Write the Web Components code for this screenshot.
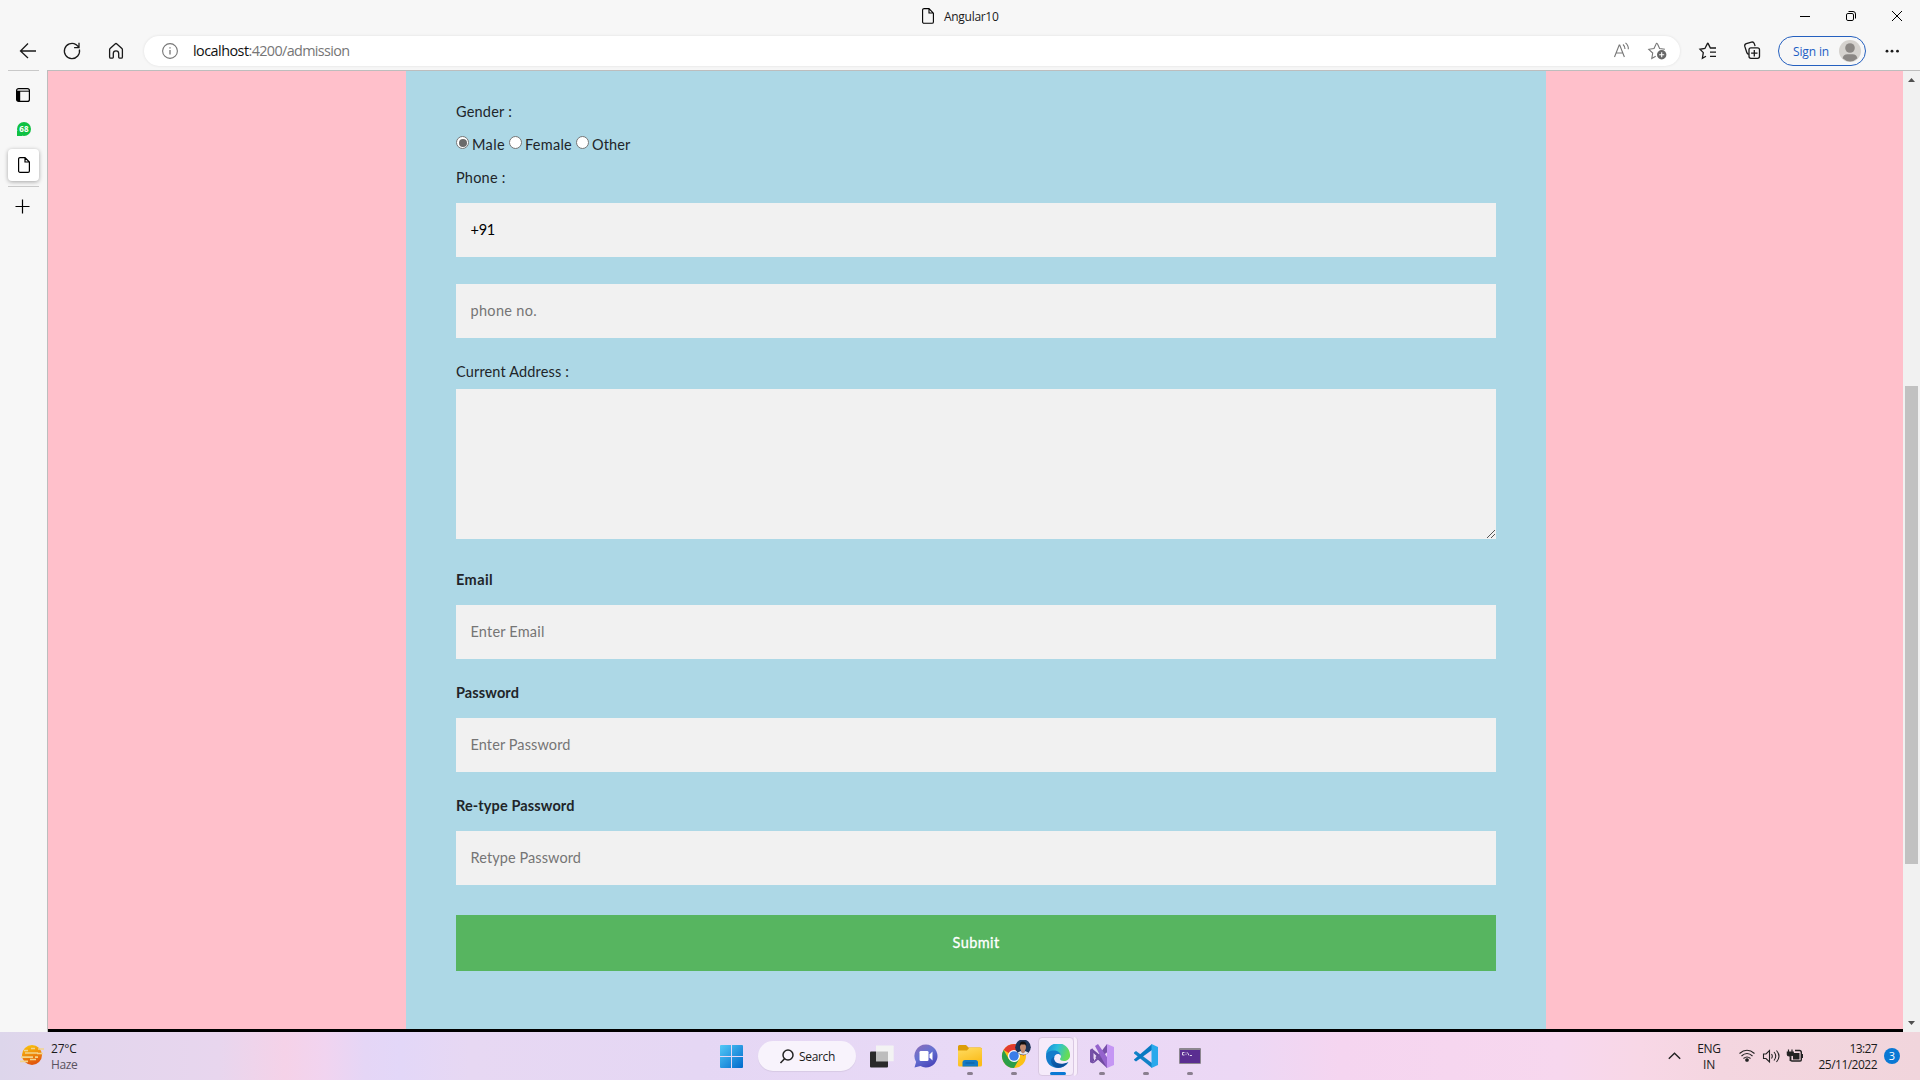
<!DOCTYPE html>
<html lang="en">
<head>
<meta charset="utf-8">
<title>Angular10</title>
<style>
html,body{margin:0;padding:0;height:100%;overflow:hidden;background:#f7f7f7}
desk-top{height:1080px}
</style>
</head>
<body>
<desk-top></desk-top>
<script>
function define(name, css, html, connected) {
  const t = document.createElement('template');
  t.innerHTML = '<style>*{box-sizing:border-box}svg{display:block}' + css + '</style>' + html;
  customElements.define(name, class extends HTMLElement {
    constructor() {
      super();
      this.attachShadow({ mode: 'open' }).appendChild(t.content.cloneNode(true));
    }
    connectedCallback() { if (connected) connected.call(this, this.shadowRoot); }
  });
}

/* A single line of text whose tracking is adjusted to a given width. */
define('fit-text', ':host{display:inline-block;white-space:pre;flex:none}span{display:inline-block}', '<span><slot></slot></span>', function (root) {
  const s = root.querySelector('span'), want = +this.getAttribute('w'), n = this.textContent.length;
  if (!want) return;
  s.style.letterSpacing = (want - s.getBoundingClientRect().width) / n + 'px';
});

define('title-bar', `
:host{display:flex;height:32px;align-items:center;font:12px "Open Sans",sans-serif;color:#1b1b1b}
.tab{flex:1;display:flex;align-items:center;padding-left:922px;gap:10px}
.win{display:flex}.win svg{width:46px;height:32px}`,
`<div class="tab"><svg width="12" height="16" viewBox="0 0 12 16" fill="none" stroke="#000" stroke-width="1.1"><path d="M1.8.6H7l4.4 4.5v8.8a1.4 1.4 0 0 1-1.4 1.4H2a1.4 1.4 0 0 1-1.4-1.4V2A1.4 1.4 0 0 1 2 .6M7 .6V5h4.4"/></svg><fit-text w="54.5">Angular10</fit-text></div>
<div class="win">
<svg viewBox="0 0 46 32" stroke="#000"><path d="M18 16.5h10"/></svg>
<svg viewBox="0 0 46 32" fill="none" stroke="#000"><rect x="18.5" y="13.5" width="7" height="7" rx="1.4"/><path d="M20.5 11.5H25a2.5 2.5 0 0 1 2.5 2.5v4.5"/></svg>
<svg viewBox="0 0 46 32" fill="none" stroke="#000"><path d="m18 11 10 10m0-10L18 21"/></svg>
</div>`);

define('tool-bar', `
:host{display:flex;height:38px;align-items:flex-start;padding-top:4px;font:14.4px "Open Sans",sans-serif}
.nav{display:flex;width:144px;flex:none}.nav svg{width:44px;height:30px;flex:none}
.addr{width:1536px;flex:none;height:30px;border-radius:15px;background:#fff;box-shadow:0 0 3px #0000001a;display:flex;align-items:center;padding-left:18px}
.url{flex:1;padding-left:15px;display:flex;line-height:30px;color:#767676}
.url fit-text:first-child{color:#111}
.addr>svg{flex:none}
.r{display:flex;flex:1}
.sign{margin-left:10px;width:88px;height:30px;border:1.4px solid #2560bf;border-radius:15px;display:flex;align-items:center;justify-content:flex-end;gap:10px;padding-right:4px;color:#1d5dc4;font-size:12px;flex:none}`,
`<div class="nav">
<svg style="margin-left:6px" viewBox="6 0 44 30" fill="none" stroke="#1a1a1a" stroke-width="1.3"><path d="M36 15H20.5M28 7.5 20.5 15l7.5 7"/></svg>
<svg viewBox="50 0 44 30" fill="none" stroke="#1a1a1a" stroke-width="1.3"><path d="M79.4 13.5A7.6 7.6 0 1 1 76 8.6l3 2.6M79 6.8v4.9h-4.9"/></svg>
<svg viewBox="94 0 44 30" fill="none" stroke="#1a1a1a" stroke-width="1.3"><path d="M109.6 13.7q0-.7.5-1.2l5-4.6q.9-.8 1.8 0l5 4.6q.5.5.5 1.2v7.2q0 1.2-1.2 1.2h-1.7q-.8 0-.8-.8v-3.7a2.7 2.7 0 0 0-5.4 0v3.7q0 .8-.8.8h-1.7q-1.2 0-1.2-1.2z"/></svg>
</div>
<div class="addr">
<svg width="16" height="16" viewBox="0 0 16 16" fill="none" stroke="#767676" stroke-width="1.1"><circle cx="8" cy="8" r="7.4"/><path d="M8 6.9v4.6M8 4.2v1.4" stroke-width="1.3"/></svg>
<div class="url"><fit-text w="55.5">localhost</fit-text><fit-text w="101">:4200/admission</fit-text></div>
<svg width="90" height="30" viewBox="0 0 90 30" fill="none" stroke="#767676" stroke-width="1.1"><path d="m24.5 21 4.7-12h.5l4.7 12M26.2 17h6.6M33 8.5q2.2 2 2 4.5M35.5 6.8q3.2 2.7 2.8 6.5"/><path d="m67.3 7.6 2.3 4.9 5.3.8M66 8.2l-2 4.3-5.2.8 3.9 3.7-.9 5.4 3.9-2.1"/><path d="M66 8.2q.6-1.400 1.300-.6"/><circle cx="71.7" cy="18.7" r="4.7" fill="#666" stroke="none"/><path d="M71.7 16.2v5M69.2 18.7h5" stroke="#fff"/></svg>
</div>
<div class="r"><svg width="88" height="30" viewBox="1680 0 88 30" fill="none" stroke="#1a1a1a" stroke-width="1.3"><path d="m1706 20.200-3.600 2 .9-5.600-3.300-3.300 4.900-.8 2.500-4.900q.4-.8.8 0l2.200 4.500M1710 12h6m-6 4.100h6m-6 4.200h6"/>
<path d="M1748.800 18.300q-1.600-.4-2-1.800l-2-6.100q-.5-2 1.500-2.700l5.200-1.600q2-.5 2.700 1.300l.9 2.700"/><rect x="1749" y="11.8" width="10.500" height="10.500" rx="2"/><path d="M1754.300 14v6.400m-3.200-3.200h6.400"/></svg>
<div class="sign"><fit-text w="36">Sign in</fit-text><svg width="22" height="22" viewBox="0 0 22 22"><circle cx="11" cy="11" r="11" fill="#d5d2ce"/><circle cx="11" cy="8" r="4.8" fill="#8b8784"/><path d="M3.600 18.200q.8-4 4.800-4h5.200q4 0 4.800 4-7.200 6.700-14.800 0" fill="#8b8784"/></svg></div>
<svg width="54" height="30" viewBox="1866 0 54 30" fill="#1a1a1a"><circle cx="1887" cy="15.2" r="1.4"/><circle cx="1892" cy="15.2" r="1.4"/><circle cx="1897.500" cy="15.2" r="1.400"/></svg>
</div>`);

define('side-bar', `
:host{display:flex;flex-direction:column;align-items:center;width:47px;flex:none}
hr{width:31px;height:1px;border:0;margin:0;background:#c9c9c9;flex:none}
div{display:flex;align-items:center;justify-content:center;width:31px;flex:none}
.a{height:32px;background:#fff;border-radius:4px;box-shadow:0 1px 4px #0005}
.b{position:relative;width:14px;height:14px;border-radius:50%;background:#0fc143;color:#fff;font:bold 8px/14px "Open Sans",sans-serif}
.b:before{content:"";position:absolute;left:0;bottom:0;width:5px;height:5px;background:#0fc143}
.b fit-text{position:relative}`,
`<hr><div style="height:48px;padding-right:2px"><svg width="14" height="14" viewBox="0 0 14 14"><rect x=".6" y=".6" width="12.800" height="12.800" rx="2" fill="none" stroke="#000" stroke-width="1.2"/><path d="M1 3h3.200v10H1z"/><path d="M1 3.200h12" stroke="#000"/></svg></div>
<div style="height:20px;padding-left:1px"><div class="b"><fit-text w="9.500">68</fit-text></div></div>
<div style="height:10px"></div>
<div class="a"><svg width="12" height="16" viewBox="0 0 12 16" fill="none" stroke="#000" stroke-width="1.2"><path d="M2 .6h5l4.400 4.500v8.800a1.400 1.400 0 0 1-1.400 1.400H2a1.400 1.400 0 0 1-1.400-1.400V2A1.400 1.400 0 0 1 2 .6M7 .6V5h4.400"/></svg></div>
<hr style="margin-top:5px"><div style="height:39px;padding-right:2px"><svg width="15" height="15" viewBox="0 0 15 15" stroke="#000" stroke-width="1.2"><path d="M7.500.5v14M.5 7.500h14"/></svg></div>`);

define('form-label', ':host{display:flex;align-items:center;height:24px;padding-bottom:1px;box-sizing:border-box;color:#212529}:host([bold]){font-weight:700}', '<slot></slot>');
define('form-field', ':host{display:flex;align-items:center;height:54px;padding:0 0 1px 14.5px;box-sizing:border-box;background:#f1f1f1;color:#757575}:host([filled]){color:#000}', '<slot></slot>');
define('radio-option', `:host{display:flex;align-items:flex-start;height:24px;color:#212529}
i{width:13px;height:13px;border:1px solid #767676;border-radius:50%;background:#fff;margin:4px 3px 0 0;padding:1.5px;flex:none}
:host([checked]) i:before{content:"";display:block;width:8px;height:8px;border-radius:50%;background:#6b6b6b}`,
`<i></i><slot></slot>`);
define('form-textarea', ':host{display:flex;height:150px;box-sizing:border-box;background:#f1f1f1;align-items:flex-end;justify-content:flex-end;padding:0 1px 1px 0}',
`<svg width="8" height="8" viewBox="0 0 8 8" shape-rendering="crispEdges" fill="#555"><path d="M0 7h1v1H0zM1 6h1v1H1zM2 5h1v1H2zM3 4h1v1H3zM4 3h1v1H4zM5 2h1v1H5zM6 1h1v1H6zM7 0h1v1H7zM4 7h1v1H4zM5 6h1v1H5zM6 5h1v1H6zM7 4h1v1H7z"/></svg>`);
define('submit-button', ':host{display:flex;align-items:center;justify-content:center;height:56px;padding-bottom:1px;box-sizing:border-box;background:#57b560;color:#fff;-webkit-text-stroke:.3px #fff}', '<slot></slot>');

define('admission-form', `
:host{display:flex;flex-direction:column;width:1140px;flex:none;box-sizing:border-box;background:#add8e6;padding:29px 50px 0 50px;font:14.5px Lato,sans-serif}
.radios{display:flex;gap:4px}.radios fit-text{line-height:25px}`,
`<form-label><fit-text w="56">Gender :</fit-text></form-label>
<div class="radios" style="margin-top:8px"><radio-option checked><fit-text w="33">Male</fit-text></radio-option><radio-option><fit-text w="47">Female</fit-text></radio-option><radio-option><fit-text w="38.500">Other</fit-text></radio-option></div>
<form-label style="margin-top:10px"><fit-text w="49.500">Phone :</fit-text></form-label>
<form-field filled style="margin-top:13px"><fit-text w="24.500">+91</fit-text></form-field>
<form-field style="margin-top:27px"><fit-text w="66.500">phone no.</fit-text></form-field>
<form-label style="margin-top:22px"><fit-text w="113">Current Address :</fit-text></form-label>
<form-textarea style="margin-top:5px"></form-textarea>
<form-label bold style="margin-top:29px"><fit-text w="37">Email</fit-text></form-label>
<form-field style="margin-top:13px"><fit-text w="74">Enter Email</fit-text></form-field>
<form-label bold style="margin-top:22px"><fit-text w="63">Password</fit-text></form-label>
<form-field style="margin-top:13px"><fit-text w="100">Enter Password</fit-text></form-field>
<form-label bold style="margin-top:22px"><fit-text w="118.500">Re-type Password</fit-text></form-label>
<form-field style="margin-top:13px"><fit-text w="110.500">Retype Password</fit-text></form-field>
<submit-button style="margin-top:30px"><fit-text w="47">Submit</fit-text></submit-button>`);

define('page-scrollbar', `
:host{display:flex;flex-direction:column;align-items:center;width:17px;height:961px;background:#f1f1f1;flex:none}
i{width:13px;height:478px;margin-top:298px;background:#c1c1c1}svg{flex:none}`,
`<svg width="17" height="17" viewBox="0 0 17 17" fill="#505050"><path d="M5 11l3.500-4 3.500 4z"/></svg><i></i><svg style="margin-top:auto" width="17" height="17" viewBox="0 0 17 17" fill="#505050"><path d="M5 6h7l-3.500 4z"/></svg>`);

define('page-view', `
:host{display:flex;flex:1;border:solid #bdbdbd;border-width:1px 0 0 1px}
.v{flex:1;display:flex;justify-content:flex-start;padding-left:358px;background:#ffc0cb;border-bottom:3px solid #000}`,
`<div class="v"><admission-form></admission-form></div><page-scrollbar></page-scrollbar>`);

define('task-item', `
:host{display:flex;width:44px;height:48px;align-items:center;justify-content:center;position:relative;flex:none}
i{position:absolute;bottom:5px;left:19px;width:6px;height:3px;border-radius:2px;background:#8a7f8f;display:none}
:host([open]) i{display:block}:host([active]) i{display:block;width:16px;left:14px;background:#0a78d4}
:host([active]):before{content:"";position:absolute;left:2px;top:5px;width:36px;height:39px;border-radius:4px;background:#faf4fcb0;border:1px solid #d9c8e2;box-sizing:border-box}
b{display:none}:host([active]) b{display:block;position:absolute;left:38px;top:5px;height:39px;width:4px;border-radius:0 4px 4px 0;background:#f8eefb;border-right:1px solid #dccbe4}
::slotted(*){position:relative}`, '<b></b><slot></slot><i></i>');

define('task-bar', `
:host{display:flex;height:48px;font:12px "Open Sans",sans-serif;color:#1b1b1b;
background:linear-gradient(90deg,#ddd6eb 0,#e3d6ed 80px,#e8d6ee 220px,#f5d2e8 285px,#f1d4f0 325px,#e5d6f6 365px,#e3d7f8 400px,#e7d8f3 470px,#e5d7f4 700px,#e8d9f6 960px,#ecd8f5 1240px,#f5d5f0 1340px,#f7d7ee 1560px,#f8d7e6 1640px,#f4d6e0 1720px,#f1d5dc 1920px)}
.w{width:709px;display:flex;padding-left:20px;gap:7px;flex:none}.w>svg{margin-top:13px;flex:none}
.two{display:flex;flex-direction:column;padding-top:9px;line-height:16px;height:48px}
.apps{display:flex;width:930px;flex:none}
.search{display:flex;align-items:center;width:98px;height:30px;margin:9px 3.500px 0 5px;border-radius:15px;background:#f8f3fc;box-shadow:0 1px 1px #0001;padding-left:22px;gap:5px;flex:none}
.tray{display:flex;align-items:flex-start;flex:1}.tray svg{flex:none}
.badge{width:16px;height:16px;border-radius:50%;background:#0a78d4;color:#fff;text-align:center;line-height:16px;margin:16px 0 0 7px;font-size:11px}`,
`<div class="w"><svg width="24" height="21" viewBox="0 0 24 21"><defs><linearGradient id="s" x2=".3" y2="1"><stop stop-color="#fccc0c"/><stop offset="1" stop-color="#e2580c"/></linearGradient></defs><circle cx="12" cy="10" r="10" fill="url(#s)"/><path d="M11 3.500h4M18 4h6M4 5.500h4M5 8h13M17 8.500h6M1 12.200h12M15 12.200h3M0 16.300h8M10 14.500h6" stroke="#f2d48b" stroke-width="1.700"/></svg>
<div class="two"><fit-text w="25.500">27°C</fit-text><fit-text w="26.500" style="color:#5a5360">Haze</fit-text></div></div>
<div class="apps">
<task-item><svg width="23" height="23" viewBox="0 0 23 23"><defs><linearGradient id="g" x2="1" y2="1"><stop stop-color="#53c9f7"/><stop offset="1" stop-color="#0069cc"/></linearGradient></defs><path fill="url(#g)" d="M0 1q0-1 1-1h10v11H0zM12 0h10q1 0 1 1v10H12zM0 12h11v11H1q-1 0-1-1zM12 12h11v10q0 1-1 1H12z"/></svg></task-item>
<div class="search"><svg width="14" height="15" viewBox="0 0 14 15" fill="none" stroke="#222" stroke-width="1.500"><circle cx="8" cy="6" r="5"/><path d="m4.500 9.700-4 4.400"/></svg><fit-text w="36">Search</fit-text></div>
<task-item><svg width="24" height="23" viewBox="0 0 24 23"><path d="M0 7.500q0-1 1-1h17v15q0 1-1 1H1q-1 0-1-1z" fill="#2a2a2a"/><path d="M6 .5h17q.7 0 .7.700v15H6z" fill="#f3f3f3"/><path d="M6 6.500h12v9.700H6z" fill="#bdbdbd"/></svg></task-item>
<task-item><svg width="24" height="24" viewBox="0 0 24 24"><defs><linearGradient id="c" x1="0" x2=".6" y2="1"><stop stop-color="#8f6bb5"/><stop offset=".5" stop-color="#6672d2"/><stop offset="1" stop-color="#4b48bb"/></linearGradient></defs><path d="M12 .5a11.500 11.500 0 1 1-5.500 21.600L.5 23.500l1.600-5.600A11.500 11.500 0 0 1 12 .5" fill="url(#c)"/><rect x="5.500" y="7" width="9" height="10" rx="1.300" fill="#fff"/><path d="m15.500 10.500 3-3v9l-3-3z" fill="#fff"/></svg></task-item>
<task-item open><svg width="24" height="22" viewBox="0 0 24 22"><defs><linearGradient id="f" y2="1" x2=".4"><stop stop-color="#ffdc63"/><stop offset="1" stop-color="#fbbc19"/></linearGradient></defs><path d="M0 1.500Q0 0 1.500 0H8l2.500 2.500H22Q24 2.500 24 4v5H0z" fill="#dc9d08"/><path d="M0 5.500h9l2.500-3H22q2 0 2 1.800V20q0 1.500-1.500 1.500h-21Q0 21.500 0 20z" fill="url(#f)"/><path d="M4.500 21.500v-4q0-2.500 2.500-2.500h10.500q2.500 0 2.500 2.500v4z" fill="#1379c5"/><path d="M7.500 18h9" stroke="#0d5c9d"/></svg></task-item>
<task-item open><svg width="34" height="32" viewBox="-5 -4 34 32"><circle cx="12" cy="12" r="12" fill="#fbc116"/><path d="M12 12 1.600 6A12 12 0 0 1 22.400 6z" fill="#e33b2e"/><path d="M12 12 6.800 15 1.600 6A12 12 0 0 0 12 24l5.200-9z" fill="#2b9e48"/><path d="M12 6h11l-1 6z" fill="#e33b2e"/><circle cx="12" cy="12" r="6" fill="#fff"/><circle cx="12" cy="12" r="4.800" fill="#3b7de8"/><g transform="translate(1.500 0)"><circle cx="19.500" cy="3.200" r="7.800" fill="#1d3558"/><path d="M14 8.800q5.500-4 11 0-4.500 4-11 0" fill="#e4e8ef"/><path d="M17.500 5h4v3l-2 1.500-2-1.500z" fill="#b98168"/><ellipse cx="19.500" cy="3" rx="3" ry="4" fill="#c18b70"/><path d="M16.300 2.500q-.7-5 3.200-5t3.300 5l-1-2h-4.500z" fill="#111"/></g></svg></task-item>
<task-item active><svg width="24" height="24" viewBox="0 0 24 24"><defs><linearGradient id="e1" x2="1" y2=".3"><stop stop-color="#1688d6"/><stop offset=".5" stop-color="#2bbfdc"/><stop offset="1" stop-color="#66dc55"/></linearGradient><linearGradient id="e2" x2=".7" y2="1"><stop stop-color="#0c69bd"/><stop offset="1" stop-color="#0c4a93"/></linearGradient></defs><path d="M0 12A12 12 0 0 1 24 10.500c.5 4-2.500 6.500-6 6.500-2.500 0-4-.800-4-2 0-.8 1-1 1-3 0-2-2-4-5-4-5 0-9 1-10 4" fill="url(#e1)"/><path d="M0 12.500C0 8 4 6.500 8 6.500c4 0 7 2.500 7 5.500-2-3.500-7-2-7 2.500 0 5 6 8 14.500 3.500C20 22 16 24 12 24 5 24 0 19 0 12.500" fill="#147ccb"/><path d="M8.500 12.500c-2 5 3 9.500 13.500 6-4 5-9 6-13 4.500-5-3-5.500-9-.5-10.500" fill="url(#e2)"/></svg></task-item>
<task-item open><svg width="24" height="24" viewBox="0 0 24 24"><path d="m0 6 2-1.500 15 12.500v7L4 12v5l-2 2-2-1z" fill="#6f4ba0"/><path d="M0 18V6l3-1.500v15zM2 19.500 17 0l1 7.500L4 19z" fill="#7650a8"/><path d="M5 2 8 0l11 16-2 8z" fill="#9563cd"/><path d="m17 0 7 3v18l-7 3z" fill="#c596f4"/><path d="m3.500 9 3 3-3 3z" fill="#eadaf5"/></svg></task-item>
<task-item open><svg width="24" height="24" viewBox="0 0 24 24"><path d="M0 8.500 2 7l16 12v5L0 9.500z" fill="#1282c7"/><path d="M0 15.500 18 0v6L2 17.500 0 16z" fill="#0879c2"/><path d="m17.500 0 6.500 3v18l-6.500 3z" fill="#2aa9ec"/></svg></task-item>
<task-item open><svg width="22" height="16" viewBox="0 0 22 16"><rect width="22" height="16" rx="1" fill="#8d8790"/><path d="M1 2h20v13H1z" fill="#5a2d91"/><path d="M5.500 4.500H3.500v2.500h2M7 4.500v.8m0 1v.800M8.500 4.500l1.500 3M11 7.500h2" fill="none" stroke="#fff" stroke-width=".8"/></svg></task-item>
</div>
<div class="tray"><svg style="margin-left:29px" width="13" height="48" viewBox="0 0 13 48" fill="none" stroke="#222" stroke-width="1.400"><path d="m.8 26.800 5.700-5.600 5.700 5.600"/></svg>
<div class="two" style="align-items:center;margin-left:16px;width:24px"><fit-text w="23.500">ENG</fit-text><fit-text w="12">IN</fit-text></div>
<svg style="margin-left:16px" width="66" height="48" viewBox="1737 0 66 48" fill="none" stroke="#222" stroke-width="1.100"><path d="M1739.500 21.500q7.500-6.500 15 0M1741.500 24q5.500-5 11 0M1743.500 26.500q3.500-3 7 0"/><circle cx="1747" cy="28" r="1.300" fill="#222"/><path d="M1763.500 22h2.500l3.500-3.500v11.500L1766 26.500h-2.500zM1771.500 22q1.600 2.300 0 4.500M1774 20q3.500 4 0 8.500M1776.500 18.500q5 5.500 0 11.500"/><path d="M1795 18.500h4.500q1.800 0 1.800 1.800v7.500q0 1.200-1.200 1.200h-8.200q-1.200 0-1.200-1.200V25" stroke-width="1.400"/><path d="M1793 21h6.500v6.500h-6.500zM1801.500 22h1.500v4h-1.500z" fill="#222" stroke="none"/><path d="M1787.300 20h6v2.500q-1 1.500-2 1.500h-2q-2 0-2-1.500z" fill="#222"/><path d="M1788.500 17.500v3m3.500-3v3M1790.200 23v6" stroke-width="1.200"/></svg>
<div class="two" style="align-items:flex-end;margin-left:14px;width:60px"><fit-text w="27.500">13:27</fit-text><fit-text w="58.500">25/11/2022</fit-text></div>
<div class="badge">3</div></div>`);

define('desk-top', `
:host{display:flex;flex-direction:column;width:1920px;background:#f7f7f7}
.m{display:flex;flex:1;min-height:0}`,
`<title-bar></title-bar><tool-bar></tool-bar><div class="m"><side-bar></side-bar><page-view></page-view></div><task-bar></task-bar>`);
</script>
</body>
</html>
